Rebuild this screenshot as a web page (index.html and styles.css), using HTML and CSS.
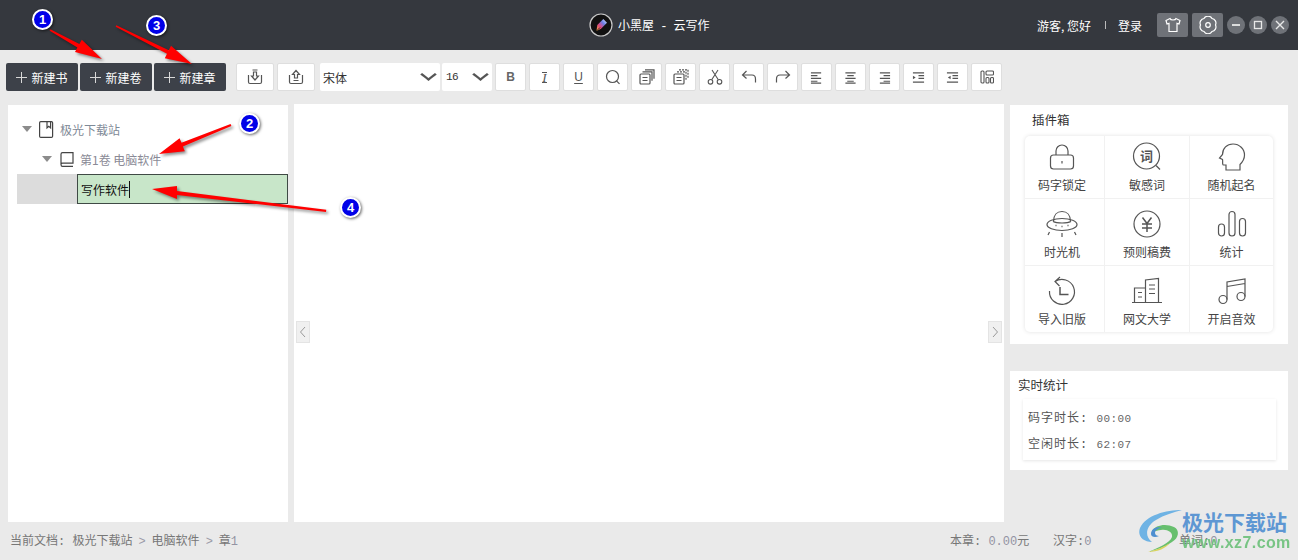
FILE: index.html
```html
<!DOCTYPE html>
<html lang="zh-CN">

<head>
    <meta charset="UTF-8" />
    <title>小黑屋 - 云写作</title>
    <link rel="stylesheet" href="styles.css">
</head>

<body>

    <header class="titlebar">
        <div class="app-name">
            <svg class="app-logo" width="24" height="24" viewBox="0 0 24 24">
                <defs>
                    <linearGradient id="penFill" x1="0" y1="1" x2="1" y2="0">
                        <stop offset="0" stop-color="#f4b23c" />
                        <stop offset="0.35" stop-color="#e0487c" />
                        <stop offset="0.65" stop-color="#6a7fe8" />
                        <stop offset="1" stop-color="#e8f2fa" />
                    </linearGradient>
                </defs>
                <circle cx="12" cy="12" r="11" fill="#111" stroke="#c9c9c9" stroke-width="1.200" />
                <path d="M7.500 18l.8-6 6-6 3.700 3.700-6 6z" fill="url(#penFill)" />
                <path d="M7.500 18l3.500-3.500" stroke="#111" stroke-width="0.800" />
            </svg>
            <span>小黑屋 - 云写作</span>
        </div>
        <div class="user-area">
            <span>游客, 您好</span>
            <span class="sep"></span>
            <span>登录</span>
            <div class="square-btns">
                <button class="square-btn">
                    <svg width="18" height="18" viewBox="0 0 18 18" fill="none" stroke="#fff" stroke-width="1.200">
                        <path d="M6 2.500L2 4.500l1 3.500 2-.6V15.500h8V7.400l2 .6 1-3.500-4-2c-.5 2-5.500 2-6 0z" />
                    </svg>
                </button>
                <button class="square-btn">
                    <svg width="18" height="18" viewBox="0 0 18 18" fill="none" stroke="#fff" stroke-width="1.200">
                        <path d="M5 2.500A4.600 4.600 0 0 1 13 2.500 4.600 4.600 0 0 1 16.500 9 4.600 4.600 0 0 1 13 15.500 4.600 4.600 0 0 1 5 15.500 4.600 4.600 0 0 1 1.500 9 4.600 4.600 0 0 1 5 2.500z" />
                        <circle cx="9" cy="9" r="2.300" />
                    </svg>
                </button>
            </div>
            <div class="win-btns">
                <button class="win-btn">
                    <svg width="10" height="10" viewBox="0 0 10 10" stroke="#e8e8e8" stroke-width="1.800"><path d="M1 5h8" /></svg>
                </button>
                <button class="win-btn">
                    <svg width="10" height="10" viewBox="0 0 10 10" fill="none" stroke="#e8e8e8" stroke-width="1.300"><rect x="1.500" y="1.500" width="7" height="7" /></svg>
                </button>
                <button class="win-btn">
                    <svg width="10" height="10" viewBox="0 0 10 10" stroke="#e8e8e8" stroke-width="1.400"><path d="M1 1l8 8M9 1l-8 8" /></svg>
                </button>
            </div>
        </div>
    </header>

    <div class="toolbar">
        <div class="new-group">
            <button class="new-btn"><span class="plus"></span>新建书</button>
            <button class="new-btn"><span class="plus"></span>新建卷</button>
            <button class="new-btn"><span class="plus"></span>新建章</button>
        </div>
        <div class="io-group">
            <button class="tool-btn wide">
                <svg width="16" height="16" viewBox="0 0 16 16" fill="none" stroke="#555" stroke-width="1.200">
                    <path d="M1.500 6v7c0 .8.500 1.500 1.500 1.500h10c1 0 1.500-.7 1.500-1.500V6M5.500 1h5M6.500 3v4H4.500L8 11 11.500 7H9.500V3z" />
                </svg>
            </button>
            <button class="tool-btn wide">
                <svg width="16" height="16" viewBox="0 0 16 16" fill="none" stroke="#555" stroke-width="1.200">
                    <path d="M1.500 6v7c0 .8.500 1.500 1.500 1.500h10c1 0 1.500-.7 1.500-1.500V6M5.500 11.500h5M6.500 9V5.500H4.500L8 1.500l3.500 4H9.500V9z" />
                </svg>
            </button>
        </div>
        <div class="select font-family">宋体<span class="chevron"></span></div>
        <div class="select font-size">16<span class="chevron"></span></div>
        <div class="format-group">
            <button class="tool-btn"><span class="fmt-b">B</span></button>
            <button class="tool-btn"><span class="fmt-i">I</span></button>
            <button class="tool-btn"><span class="fmt-u">U</span></button>
            <button class="tool-btn">
                <svg width="16" height="16" viewBox="0 0 16 16" fill="none" stroke="#555" stroke-width="1.200"><circle cx="7.500" cy="7.500" r="6" /><path d="M11.500 11.800l3 3" /></svg>
            </button>
            <button class="tool-btn">
                <svg width="16" height="16" viewBox="0 0 16 16" fill="none" stroke="#555" stroke-width="1.200"><rect x="1" y="5" width="10" height="10" rx="1" /><path d="M3.500 2.800h9.500v9M6 .8h9v9M3.500 8.500h5M3.500 11.500h5" /></svg>
            </button>
            <button class="tool-btn">
                <svg width="16" height="16" viewBox="0 0 16 16" fill="none" stroke="#555" stroke-width="1.200"><rect x="1" y="5" width="10" height="10" rx="1" /><path d="M4 2.800h9v9" stroke-dasharray="2 1" /><path d="M6 .8h9v9" stroke-dasharray="2 1" /><path d="M3.500 8.500h5M3.500 11.500h5" /></svg>
            </button>
            <button class="tool-btn">
                <svg width="16" height="16" viewBox="0 0 16 16" fill="none" stroke="#555" stroke-width="1.100"><circle cx="3.500" cy="12.800" r="2.300" /><circle cx="12.500" cy="12.800" r="2.300" /><path d="M4.700 10.800L11 1M11.300 10.800L5 1" /></svg>
            </button>
            <button class="tool-btn">
                <svg width="16" height="16" viewBox="0 0 16 16" fill="none" stroke="#555" stroke-width="1.200"><path d="M5.500 2L1.500 6l4 3.500M1.500 6H11c2.500 0 3.500 2 3.500 4v3.500" /></svg>
            </button>
            <button class="tool-btn">
                <svg width="16" height="16" viewBox="0 0 16 16" fill="none" stroke="#555" stroke-width="1.200"><path d="M10.500 2l4 4-4 3.500M14.500 6H5C2.500 6 1.500 8 1.500 10v3.500" /></svg>
            </button>
            <button class="tool-btn">
                <svg width="13" height="13" viewBox="0 0 14 14" stroke="#555" stroke-width="1.200"><path d="M1 2h11M1 5h7M1 8h11M1 11h7M1 13h11" /></svg>
            </button>
            <button class="tool-btn">
                <svg width="13" height="13" viewBox="0 0 14 14" stroke="#555" stroke-width="1.200"><path d="M1.500 2h11M3.500 5h7M1.500 8h11M3.500 11h7M1.500 13h11" /></svg>
            </button>
            <button class="tool-btn">
                <svg width="13" height="13" viewBox="0 0 14 14" stroke="#555" stroke-width="1.200"><path d="M2 2h11M6 5h7M2 8h11M6 11h7M2 13h11" /></svg>
            </button>
            <button class="tool-btn">
                <svg width="13" height="13" viewBox="0 0 14 14" stroke="#555" stroke-width="1.200"><path d="M1 2h12M7 5h6M7 8h6M1 12h12" /><path d="M1 5l3 2-3 2z" fill="#555" stroke="none" /></svg>
            </button>
            <button class="tool-btn">
                <svg width="13" height="13" viewBox="0 0 14 14" stroke="#555" stroke-width="1.200"><path d="M1 2h12M7 5h6M7 8h6M1 12h12" /><path d="M5 5L2 7l3 2z" fill="#555" stroke="none" /></svg>
            </button>
            <button class="tool-btn">
                <svg width="14" height="14" viewBox="0 0 14 14" fill="none" stroke="#555" stroke-width="1.100"><rect x="1" y="1" width="3" height="12" rx="1" /><rect x="6" y="1" width="7.500" height="4" rx="1" /><rect x="6" y="7.500" width="3" height="5.500" rx="1" /><rect x="10.500" y="7.500" width="3" height="5.500" rx="1" /></svg>
            </button>
        </div>
    </div>

    <main class="main">
        <aside class="tree-panel">
            <div class="tree-row book-row">
                <span class="caret"></span>
                <svg width="15" height="17" viewBox="0 0 15 17" fill="none" stroke="#444" stroke-width="1.200"><rect x=".6" y=".6" width="13" height="15.800" rx="1.200" /><path d="M8 .6v6.400l1.800-1.600L11.600 7V.6" /></svg>
                <span>极光下载站</span>
            </div>
            <div class="tree-row volume-row">
                <span class="caret"></span>
                <svg width="14" height="15" viewBox="0 0 14 15" fill="none" stroke="#444" stroke-width="1.200"><path d="M1 12.500V2.200C1 1.200 1.700.6 2.500.6h10.500v10.500H2.500C1.700 11.100 1 11.700 1 12.500c0 1 .7 1.900 1.500 1.900H13" /></svg>
                <span>第1卷 电脑软件</span>
            </div>
            <div class="chapter-row">
                <div class="chapter-input">写作软件<span class="caret-line"></span></div>
            </div>
        </aside>

        <section class="editor">
            <button class="collapse left-handle"><svg width="8" height="12" viewBox="0 0 8 12" fill="none" stroke="#999"><path d="M6 1L1.500 6 6 11" /></svg></button>
            <button class="collapse right-handle"><svg width="8" height="12" viewBox="0 0 8 12" fill="none" stroke="#999"><path d="M2 1l4.500 5L2 11" /></svg></button>
        </section>

        <aside class="side">
            <div class="plugin-box">
                <h3 class="plugin-title">插件箱</h3>
                <div class="plugin-grid">
                    <div class="plugin">
                        <svg width="30" height="30" viewBox="0 0 30 30" fill="none" stroke="#555" stroke-width="1.200"><rect x="3.500" y="13" width="23" height="14" rx="3" /><path d="M9 13V9a6 6 0 0 1 12 0v4M15 19v2.500" /></svg>
                        <span>码字锁定</span>
                    </div>
                    <div class="plugin">
                        <svg width="30" height="30" viewBox="0 0 30 30" fill="none" stroke="#555" stroke-width="1.200"><circle cx="14.500" cy="14" r="13" /><path d="M24 23.500l4 4" /><text x="14.500" y="19" text-anchor="middle" class="icon-char">词</text></svg>
                        <span>敏感词</span>
                    </div>
                    <div class="plugin">
                        <svg width="30" height="30" viewBox="0 0 30 30" fill="none" stroke="#555" stroke-width="1.200"><path d="M9 28v-5H6.500c-1.500 0-.5-4.500-1-5.500L2.500 16l3-3.500C5.500 6 10 2 16 2c6.500 0 11.500 5 11.500 11 0 4.500-2.500 7.500-4.500 9.500V28z" /></svg>
                        <span>随机起名</span>
                    </div>
                    <div class="plugin">
                        <svg width="32" height="30" viewBox="0 0 32 30" fill="none" stroke="#555" stroke-width="1.200"><path d="M7.500 12.500C7.500 6 11 2.500 16 2.500s8.500 3.500 8.500 10" /><ellipse cx="16" cy="15.500" rx="15" ry="6" /><path d="M7 12.500c4 2 14 2 18 0M3.500 23l-1.500 3M28.500 23l1.500 3M16 24v4" /><path d="M9.500 16.500h1M15.500 17.500h1M21.500 16.500h1" stroke-width="1.600" /></svg>
                        <span>时光机</span>
                    </div>
                    <div class="plugin">
                        <svg width="30" height="30" viewBox="0 0 30 30" fill="none" stroke="#555" stroke-width="1.200"><circle cx="15" cy="15" r="13" /><path d="M10.500 8.500L15 14.500l4.500-6M10 15h10M10 19h10M15 14.500V23" stroke-width="1.500" /></svg>
                        <span>预则稿费</span>
                    </div>
                    <div class="plugin">
                        <svg width="30" height="30" viewBox="0 0 30 30" fill="none" stroke="#555" stroke-width="1.200"><rect x="1.500" y="15" width="6" height="12" rx="3" /><rect x="12" y="2.500" width="6" height="24.500" rx="3" /><rect x="22.500" y="9.500" width="6" height="17.500" rx="3" /></svg>
                        <span>统计</span>
                    </div>
                    <div class="plugin">
                        <svg width="30" height="30" viewBox="0 0 30 30" fill="none" stroke="#555" stroke-width="1.200"><path d="M8 5.500a12.500 12.500 0 1 1-5.500 9.500M13 1L8 5.500l4.500 4.500" /><path d="M13 11v7.500h8.500" stroke-width="1.500" /></svg>
                        <span>导入旧版</span>
                    </div>
                    <div class="plugin">
                        <svg width="32" height="30" viewBox="0 0 32 30" fill="none" stroke="#555" stroke-width="1.200"><path d="M1 26.500h30M3.500 26.500V12h11M14.500 26.500V4l13-1.500v24M7 16.500h4M7 21h4M18 9h6M18 13h6M18 17.500h6" /></svg>
                        <span>网文大学</span>
                    </div>
                    <div class="plugin">
                        <svg width="30" height="30" viewBox="0 0 30 30" fill="none" stroke="#555" stroke-width="1.200"><circle cx="6" cy="23.500" r="4" /><circle cx="24" cy="20.500" r="4" /><path d="M10 23.500V6l18-3v17.500M10 10.500l18-3" /></svg>
                        <span>开启音效</span>
                    </div>
                </div>
            </div>

            <div class="stats-box">
                <h3 class="stats-title">实时统计</h3>
                <div class="stats-card">
                    <p>码字时长: <span class="time">00:00</span></p>
                    <p>空闲时长: <span class="time">62:07</span></p>
                </div>
            </div>
        </aside>
    </main>

    <footer class="statusbar">
        <div class="crumbs">当前文档: 极光下载站<i>&gt;</i>电脑软件<i>&gt;</i>章<b>1</b></div>
        <div class="counts">
            <span class="count-chapter">本章: <b>0.00</b>元</span>
            <span class="count-han">汉字:<b>0</b></span>
            <span class="count-word">单词:<b>0</b></span>
        </div>
    </footer>

    <!-- watermark and tutorial marks that sit over the app -->
    <div class="watermark">
        <svg class="wm-logo" width="46" height="44" viewBox="0 0 46 44" fill="none">
            <path d="M44 1C28 1 8 6 2 19c-3 8 3 14 12 14C6 27 8 17 18 11 26 6 36 3 44 1z" fill="#6fb3e4" />
            <path d="M14 22c3-6 14-8 22-4 6 3 5 11-2 15-7 5-16 8-24 10 10-4 22-9 24-15 1-5-5-8-11-7-4 .5-7 2-9 1z" fill="#67bf6e" />
            <path d="M10 43c8-2 16-5 22-9-4 5-12 9-22 9z" fill="#d9d35c" />
            <path d="M13 25c0-5 6-8 11-6-4 0-7 2-7 5 0 2 2 3 4 3-4 2-8 1-8-2z" fill="#4e8fd0" />
        </svg>
        <div class="wm-text">
            <div class="wm-name">极光下载站</div>
            <div class="wm-url">www.xz7.com</div>
        </div>
    </div>

    <svg class="arrows" width="1298" height="560" viewBox="0 0 1298 560">
        <polygon points="49.700,30.700 77.400,47.500 75,52 102,59 81.800,39.700 79.400,44 50.300,29.300" />
        <polygon points="115.700,26.700 167,53.800 164.800,58.300 192,64 171,45.700 168.800,50.200 116.300,25.300" />
        <polygon points="231.400,125.900 182.900,146.600 184.800,151.200 159,154 179.600,138.200 181.500,142.800 230.600,124.100" />
        <polygon points="326,212 177,195 177,199 152,189 177,186 177,191 326.300,209.800" />
    </svg>
    <span class="badge badge-1">1</span>
    <span class="badge badge-2">2</span>
    <span class="badge badge-3">3</span>
    <span class="badge badge-4">4</span>

</body>

</html>
```

FILE: styles.css
```css
* {
    box-sizing: border-box;
}

html,
body {
    height: 100%;
}

body {
    margin: 0;
    display: flex;
    flex-direction: column;
    overflow: hidden;
    position: relative;
    background: #eaeaea;
    color: #555;
    font-family: "Liberation Mono", "Noto Sans CJK SC", monospace;
    font-size: 12px;
}

button {
    padding: 0;
    border: none;
    font: inherit;
}

/* title bar */
.titlebar {
    height: 50px;
    flex: none;
    display: flex;
    align-items: center;
    padding-left: 589px;
    background: #35383e;
    color: #fff;
}

.app-name {
    display: flex;
    align-items: center;
    gap: 5px;
}

.app-name span {
    word-spacing: -1px;
}

.user-area {
    margin-left: auto;
    margin-right: 9px;
    display: flex;
    align-items: center;
    font-family: "Noto Sans CJK SC", sans-serif;
}

.sep {
    width: 1px;
    height: 8px;
    margin: 0 12px 0 14px;
    background: #bbb;
}

.square-btns {
    display: flex;
    gap: 4px;
    margin-left: 15px;
}

.square-btn {
    width: 31px;
    height: 24px;
    display: flex;
    align-items: center;
    justify-content: center;
    border-radius: 2px;
    background: #6f7278;
}

.win-btns {
    display: flex;
    gap: 4px;
    margin-left: 4px;
}

.win-btn {
    width: 18px;
    height: 18px;
    display: flex;
    align-items: center;
    justify-content: center;
    border-radius: 50%;
    background: #6f7278;
}

/* toolbar */
.toolbar {
    height: 54px;
    flex: none;
    display: flex;
    align-items: center;
    padding: 0 0 0 6px;
}

.new-group {
    display: flex;
    gap: 2px;
}

.new-btn {
    width: 72px;
    height: 28px;
    display: flex;
    align-items: center;
    justify-content: center;
    gap: 4px;
    border-radius: 2px;
    background: #3d4149;
    color: #fff;
    font-family: "Noto Sans CJK SC", sans-serif;
    font-size: 12px;
}

.plus {
    width: 11px;
    height: 11px;
    background:
        linear-gradient(#d8d8d8, #d8d8d8) center / 100% 1px no-repeat,
        linear-gradient(#d8d8d8, #d8d8d8) center / 1px 100% no-repeat;
}

.io-group {
    display: flex;
    gap: 3px;
    margin-left: 10px;
    margin-right: 5px;
}

.tool-btn {
    width: 31px;
    height: 28px;
    display: flex;
    align-items: center;
    justify-content: center;
    border: 1px solid #dedede;
    border-radius: 2px;
    background: #fff;
    color: #555;
    font-family: "Liberation Sans", sans-serif;
    font-size: 12px;
}

.tool-btn.wide {
    width: 38px;
}

.fmt-b {
    font-weight: 700;
    color: #666;
}

.fmt-i {
    font-family: "Liberation Serif", serif;
    font-style: italic;
    font-size: 13px;
    border-top: 1px solid #555;
    border-bottom: 1px solid #555;
    line-height: 9px;
}

.fmt-u {
    text-decoration: underline;
    text-underline-offset: 2px;
}

.select {
    height: 28px;
    display: flex;
    align-items: center;
    justify-content: space-between;
    border-radius: 2px;
    background: #fff;
    color: #333;
    font-family: "Noto Sans CJK SC", sans-serif;
}

.font-family {
    width: 120px;
    padding: 0 5px 0 3px;
}

.font-size {
    width: 50px;
    margin-left: 2px;
    padding: 0 5px 0 4px;
    font-family: "Liberation Mono", monospace;
    font-size: 11px;
    letter-spacing: -0.6px;
}

.chevron {
    width: 9px;
    height: 9px;
    margin: 0 2px 5px 0;
    border-right: 2px solid #555;
    border-bottom: 2px solid #555;
    transform: scaleX(1.300) rotate(45deg);
}

.format-group {
    display: flex;
    gap: 3px;
    margin-left: 3px;
}

/* main area */
.main {
    height: 418px;
    flex: none;
    display: flex;
    padding: 0 10px 0 8px;
    gap: 6px;
}

.tree-panel {
    width: 280px;
    margin-top: 1px;
    padding-top: 9px;
    background: #fff;
    font-family: "Noto Sans CJK SC", sans-serif;
    color: #7f8a97;
}

.tree-row {
    height: 30px;
    display: flex;
    align-items: center;
}

.tree-row svg {
    margin-right: 6px;
}

.book-row {
    padding-left: 14px;
}

.book-row .caret {
    margin-right: 7px;
}

.volume-row {
    padding-left: 34px;
    color: #8a8a96;
}

.volume-row .caret {
    margin-right: 8px;
}

.caret {
    width: 0;
    height: 0;
    border-left: 5.500px solid transparent;
    border-right: 5.500px solid transparent;
    border-top: 6px solid #8c8c8c;
}

.chapter-row {
    height: 30px;
    margin-left: 9px;
    padding-left: 60px;
    background: #dcdcdc;
}

.chapter-input {
    height: 100%;
    display: flex;
    align-items: center;
    padding-left: 3px;
    border: 1px solid #3f4a45;
    background: #c8e6c9;
    color: #111;
}

.caret-line {
    width: 1px;
    height: 17px;
    background: #111;
}

.editor {
    width: 710px;
    position: relative;
    background: #fff;
}

.collapse {
    position: absolute;
    top: 217px;
    width: 14px;
    height: 22px;
    display: flex;
    align-items: center;
    justify-content: center;
    border: 1px solid #e4e4e4;
    background: #f0f0f0;
}

.left-handle {
    left: 2px;
}

.right-handle {
    right: 2px;
}

/* right column */
.side {
    width: 278px;
    display: flex;
    flex-direction: column;
    gap: 27px;
    margin-top: 1px;
    font-family: "Noto Sans CJK SC", sans-serif;
}

.plugin-box {
    height: 239px;
    background: #fff;
    padding: 0 15px;
}

.plugin-title {
    margin: 0;
    height: 31px;
    padding-left: 7px;
    line-height: 30px;
    font-size: 12.500px;
    font-weight: 400;
    color: #333;
}

.plugin-grid {
    width: 248px;
    height: 196px;
    display: grid;
    grid-template-columns: 80px 85px 83px;
    grid-template-rows: 63px 67px 66px;
    border-radius: 5px;
    box-shadow: 0 0 4px rgba(0, 0, 0, 0.12);
}

.plugin {
    display: flex;
    flex-direction: column;
    align-items: center;
    justify-content: flex-end;
    gap: 4px;
    padding-bottom: 4px;
    border-right: 1px solid #f1f1f1;
    border-bottom: 1px solid #f1f1f1;
    color: #444;
}

.plugin:nth-child(3n) {
    border-right: none;
}

.plugin:nth-child(3n+1) {
    padding-right: 5px;
}

.plugin:nth-child(n+7) {
    border-bottom: none;
}

.plugin svg {
    flex: none;
}

.plugin span {
    line-height: 18px;
}

.icon-char {
    font-family: "Noto Sans CJK SC", sans-serif;
    font-size: 13px;
    font-weight: 700;
    fill: #555;
    stroke: none;
}

.stats-box {
    height: 99px;
    padding: 5px 12px 0 8px;
    background: #fff;
}

.stats-title {
    margin: 0;
    height: 23px;
    line-height: 18px;
    font-size: 12.500px;
    font-weight: 400;
    color: #333;
}

.stats-card {
    margin-left: 5px;
    width: 253px;
    height: 61px;
    padding: 7px 0 0 5px;
    box-shadow: 0 1px 3px rgba(0, 0, 0, 0.1);
    font-family: "Liberation Mono", "Noto Sans CJK SC", monospace;
    letter-spacing: 1px;
}

.stats-card p {
    margin: 0;
    height: 26px;
    line-height: 26px;
}

.time {
    font-size: 11px;
    letter-spacing: 0.4px;
    color: #666;
}

/* status bar */
.statusbar {
    flex: 1;
    display: flex;
    align-items: center;
    justify-content: space-between;
    padding: 0 0 2px 10px;
    color: #777;
}

.crumbs i {
    margin: 0 6px;
    font-style: normal;
    color: #9a9aa8;
}

.crumbs b,
.counts b {
    font-weight: 400;
    color: #9393a3;
}

.counts {
    display: flex;
    width: 348px;
}

.count-chapter {
    width: 103px;
}

.count-han {
    width: 126px;
}

/* marks over the app */
.watermark {
    position: absolute;
    left: 1138px;
    top: 509px;
    display: flex;
    font-family: "Noto Sans CJK SC", sans-serif;
}

.wm-text {
    margin-left: -2px;
}

.wm-name {
    height: 24px;
    line-height: 24px;
    font-size: 21px;
    font-weight: 700;
    color: #5e97d3;
}

.wm-url {
    line-height: 20px;
    font-family: "Liberation Sans", sans-serif;
    font-size: 16px;
    font-weight: 700;
    color: #6cc07a;
    opacity: 0.9;
    letter-spacing: 0.4px;
}

.arrows {
    position: absolute;
    left: 0;
    top: 0;
    pointer-events: none;
    filter: drop-shadow(2px 2px 1.500px rgba(0, 0, 0, 0.45));
}

.arrows polygon {
    fill: #f00;
}

.badge {
    position: absolute;
    width: 21px;
    height: 21px;
    border: 2px solid #fff;
    border-radius: 50%;
    background: #0000e8;
    box-shadow: 1px 1px 3px rgba(0, 0, 0, 0.6);
    color: #fff;
    font-family: "Liberation Sans", sans-serif;
    font-size: 13px;
    font-weight: 700;
    line-height: 17px;
    text-align: center;
}

.badge-1 {
    left: 32px;
    top: 9px;
}

.badge-2 {
    left: 239px;
    top: 113px;
}

.badge-3 {
    left: 146px;
    top: 15px;
}

.badge-4 {
    left: 340px;
    top: 197px;
}
```
